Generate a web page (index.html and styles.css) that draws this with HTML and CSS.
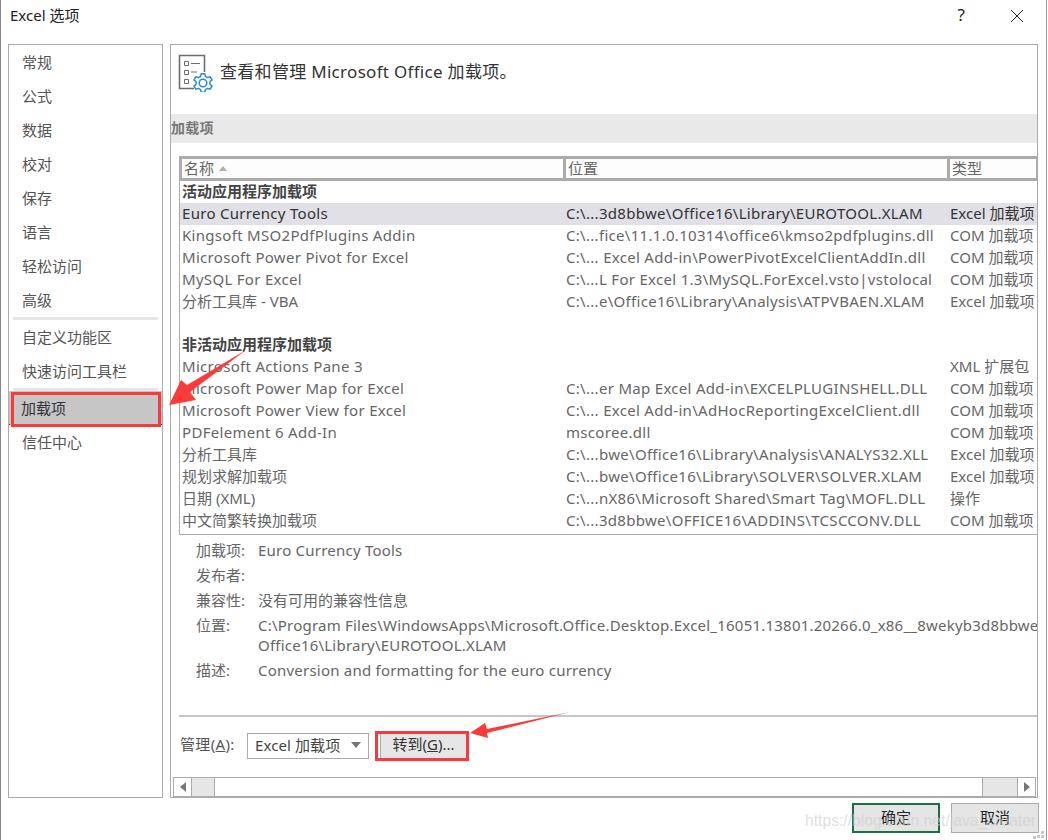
FILE: index.html
```html
<!DOCTYPE html>
<html lang="zh">
<head>
<meta charset="utf-8">
<title>Excel 选项</title>
<link rel="stylesheet" href="styles.css">
</head>
<body>
<div class="dialog">
  <header class="titlebar">
    <span class="title">Excel 选项</span>
    <span class="help">?</span>
    <svg class="close" width="14" height="14" viewBox="0 0 14 14"><path d="M1 1L13 13M13 1L1 13" stroke="#222" stroke-width="1" fill="none"/></svg>
  </header>
  <div class="content">
    <nav class="sidebar">
      <div class="nav-group">
        <div class="nav-item">常规</div>
        <div class="nav-item">公式</div>
        <div class="nav-item">数据</div>
        <div class="nav-item">校对</div>
        <div class="nav-item">保存</div>
        <div class="nav-item">语言</div>
        <div class="nav-item">轻松访问</div>
        <div class="nav-item">高级</div>
      </div>
      <div class="nav-sep"></div>
      <div class="nav-group">
        <div class="nav-item">自定义功能区</div>
        <div class="nav-item">快速访问工具栏</div>
      </div>
      <div class="nav-sep"></div>
      <div class="nav-item nav-active"><span>加载项</span></div>
      <div class="nav-item">信任中心</div>
    </nav>
    <main class="panel">
      <div class="head">
        <svg class="head-icon" width="37" height="38" viewBox="0 0 37 38">
          <path d="M26.500 18V1.500H1.500V34.500H16" fill="none" stroke="#6e6e6e" stroke-width="1.600"/>
          <path d="M6.500 7.500h4v4h-4zM6.500 16.500h4v4h-4zM6.500 25.500h4v4h-4z" fill="none" stroke="#6e6e6e" stroke-width="1"/>
          <path d="M13 9.500h9M13 18h6" stroke="#6e6e6e" stroke-width="1"/>
          <g transform="translate(25 29)" stroke="#2b8bd0" stroke-width="1.500" stroke-linejoin="round">
            <path d="M-2.390 -6.580L-1.810 -9.330L1.810 -9.330L2.390 -6.580L4.500 -5.360L7.170 -6.230L8.980 -3.090L6.890 -1.220L6.890 1.220L8.980 3.090L7.170 6.230L4.500 5.360L2.390 6.580L1.810 9.330L-1.810 9.330L-2.390 6.580L-4.500 5.360L-7.170 6.230L-8.980 3.090L-6.890 1.220L-6.890 -1.220L-8.980 -3.090L-7.170 -6.230L-4.500 -5.360Z" fill="#fff"/>
            <circle r="3.800" fill="none"/>
          </g>
        </svg>
        <span class="head-text">查看和管理 Microsoft Office 加载项。</span>
      </div>
      <div class="band">加载项</div>
      <section class="table">
        <div class="thead">
          <div class="th th-name">名称<i class="sort"></i></div>
          <div class="th th-loc">位置</div>
          <div class="th th-type">类型</div>
        </div>
        <div class="row group"><span>活动应用程序加载项</span></div>
        <div class="row selected"><span>Euro Currency Tools</span><span>C:\...3d8bbwe\Office16\Library\EUROTOOL.XLAM</span><span class="cjk">Excel 加载项</span></div>
        <div class="row"><span>Kingsoft MSO2PdfPlugins Addin</span><span>C:\...fice\11.1.0.10314\office6\kmso2pdfplugins.dll</span><span class="cjk">COM 加载项</span></div>
        <div class="row"><span>Microsoft Power Pivot for Excel</span><span>C:\... Excel Add-in\PowerPivotExcelClientAddIn.dll</span><span class="cjk">COM 加载项</span></div>
        <div class="row"><span>MySQL For Excel</span><span>C:\...L For Excel 1.3\MySQL.ForExcel.vsto|vstolocal</span><span class="cjk">COM 加载项</span></div>
        <div class="row"><span class="cjk">分析工具库 - VBA</span><span>C:\...e\Office16\Library\Analysis\ATPVBAEN.XLAM</span><span class="cjk">Excel 加载项</span></div>
        <div class="row blank"></div>
        <div class="row group"><span>非活动应用程序加载项</span></div>
        <div class="row"><span>Microsoft Actions Pane 3</span><span></span><span class="cjk">XML 扩展包</span></div>
        <div class="row"><span>Microsoft Power Map for Excel</span><span>C:\...er Map Excel Add-in\EXCELPLUGINSHELL.DLL</span><span class="cjk">COM 加载项</span></div>
        <div class="row"><span>Microsoft Power View for Excel</span><span>C:\... Excel Add-in\AdHocReportingExcelClient.dll</span><span class="cjk">COM 加载项</span></div>
        <div class="row"><span>PDFelement 6 Add-In</span><span>mscoree.dll</span><span class="cjk">COM 加载项</span></div>
        <div class="row"><span class="cjk">分析工具库</span><span>C:\...bwe\Office16\Library\Analysis\ANALYS32.XLL</span><span class="cjk">Excel 加载项</span></div>
        <div class="row"><span class="cjk">规划求解加载项</span><span>C:\...bwe\Office16\Library\SOLVER\SOLVER.XLAM</span><span class="cjk">Excel 加载项</span></div>
        <div class="row"><span class="cjk">日期 (XML)</span><span>C:\...nX86\Microsoft Shared\Smart Tag\MOFL.DLL</span><span class="cjk">操作</span></div>
        <div class="row"><span class="cjk">中文简繁转换加载项</span><span>C:\...3d8bbwe\OFFICE16\ADDINS\TCSCCONV.DLL</span><span class="cjk">COM 加载项</span></div>
      </section>
      <dl class="details">
        <dt>加载项:</dt><dd>Euro Currency Tools</dd>
        <dt>发布者:</dt><dd>&nbsp;</dd>
        <dt>兼容性:</dt><dd class="cjk">没有可用的兼容性信息</dd>
        <dt>位置:</dt><dd class="two-line">C:\Program Files\WindowsApps\Microsoft.Office.Desktop.Excel_16051.13801.20266.0_x86__8wekyb3d8bbwe\<br>Office16\Library\EUROTOOL.XLAM</dd>
        <dt>描述:</dt><dd>Conversion and formatting for the euro currency</dd>
      </dl>
      <div class="manage">
        <label class="manage-label">管理(<u>A</u>):</label>
        <div class="select"><span>Excel 加载项</span><i class="caret"></i></div>
        <div class="go-btn">转到(<u>G</u>)...</div>
      </div>
      <div class="scrollbar">
        <div class="sb-btn"><i class="tri-left"></i></div>
        <div class="sb-track-a"></div>
        <div class="sb-thumb"></div>
        <div class="sb-track-b"></div>
        <div class="sb-btn"><i class="tri-right"></i></div>
      </div>
    </main>
  </div>
  <footer class="footer">
    <div class="btn btn-ok">确定</div>
    <div class="btn">取消</div>
  </footer>
</div>
<svg class="annot" width="1048" height="840" viewBox="0 0 1048 840">
  <path d="M246 350L187 385L181 380L169 405L196 400L190 392Z" fill="#fb3a3a"/>
  <path d="M570 712L487 729L485 723L470 733L488 738L487 733Z" fill="#fb3a3a"/>
  <rect x="12.500" y="393.500" width="147" height="32" fill="none" stroke="#f93a3d" stroke-width="3"/>
  <rect x="376.500" y="732.500" width="91" height="27" fill="none" stroke="#f93a3d" stroke-width="3"/>
  <path d="M1041 831h3v3h-3zM1037 835h3v3h-3zM1041 835h3v3h-3zM1033 836h3v3h-3z" fill="#c8c8c8"/>
</svg>
<div class="watermark">https://blog.csdn.net/java_creater</div>
</body>
</html>
```
FILE: styles.css
```css
* { box-sizing: border-box; }
html, body { margin: 0; padding: 0; background: #fff; }
body {
  width: 1048px; height: 840px; overflow: hidden; position: relative;
  font-family: "Noto Sans", "Noto Sans CJK SC", sans-serif;
  font-size: 15px; color: #444;
}
.dialog { width: 1047px; height: 840px; display: flex; flex-direction: column; border-left: 1px solid #888; border-right: 1px solid #999; }
.titlebar { height: 44px; flex: none; display: flex; align-items: flex-start; padding: 5px 0 0 9px; }
.title { font-size: 15px; color: #222; line-height: 20px; flex: 1; }
.help { font-size: 17px; color: #222; line-height: 20px; margin-right: 45px; }
.close { margin: 4px 22px 0 0; }
.content { display: flex; gap: 7px; padding-left: 7px; padding-right: 8px; height: 754px; flex: none; }
.sidebar { width: 155px; flex: none; border: 1px solid #ababab; background: #fff; }
.nav-item { height: 34px; line-height: 34px; padding-left: 13px; color: #555; white-space: nowrap; }
.nav-sep { height: 3px; margin: 0 4px; background: #e6e6e6; }
.nav-active { background: #c6c6c6; color: #333; border-bottom: 1px dotted #444; padding-left: 12px; }
.panel { flex: 1; min-width: 0; border: 1px solid #ababab; display: flex; flex-direction: column; overflow: hidden; }
.head { height: 69px; flex: none; display: flex; align-items: flex-start; padding: 9px 0 0 7px; }
.head-text { font-size: 17px; letter-spacing: .3px; color: #333; margin: 7px 0 0 5px; line-height: 22px; white-space: nowrap; }
.band { height: 29px; flex: none; background: #e9e9e9; font-weight: 700; font-size: 14px; letter-spacing: .3px; color: #777; line-height: 28px; border-bottom: 1px solid #eee; }
.table { margin: 13px 0 0 8px; height: 379px; flex: none; border: 1px solid #ababab; border-right: 0; overflow: hidden; }
.thead { display: grid; grid-template-columns: 386px 384px 1fr; height: 24px; border-bottom: 1px solid #ababab; }
.th { border: solid #ababab; border-width: 2px 3px 2px 0; line-height: 18px; padding-left: 2px; color: #666; white-space: nowrap; background: #fdfdfd; }
.th-name { border-left-width: 2px; }
.th-type { border-right-width: 1px; }
.sort { display: inline-block; margin-left: 5px; vertical-align: 3px; border: 4px solid transparent; border-top: 0; border-bottom: 5px solid #b5b0a5; }
.row { display: grid; grid-template-columns: 384px 384px 1fr; height: 22px; line-height: 20px; padding-left: 2px; color: #666; white-space: nowrap; overflow: hidden; letter-spacing: .3px; }
.row span { overflow: hidden; }
.row .cjk, .details .cjk { letter-spacing: 0; }
.row.group { color: #444; font-weight: 700; display: block; line-height: 20px; letter-spacing: 0; }
.selected { background: #e0e0e6; color: #333; }
.blank { height: 21px; }
.details { margin: 3px 0 0 25px; display: grid; grid-template-columns: 62px 1fr; color: #666; flex: none; }
.details dt, .details dd { margin: 0; line-height: 25px; white-space: nowrap; }
.details dd { letter-spacing: .22px; }
.details .two-line { line-height: 20px; padding: 2px 0 3px; }
.manage { flex: none; margin: 32px 0 0 8px; border-top: 2px solid #c6c6c6; padding-top: 16px; display: flex; align-items: flex-start; height: 46px; }
.manage-label { width: 68px; padding-left: 1px; color: #555; white-space: nowrap; line-height: 23px; letter-spacing: .33px; }
.select { width: 122px; height: 26px; border: 1px solid #ababab; display: flex; align-items: center; justify-content: space-between; padding: 0 7px 3px; color: #444; white-space: nowrap; letter-spacing: .1px; }
.caret { border: 5px solid transparent; border-top: 6px solid #777; border-bottom: 0; }
.go-btn { width: 86px; height: 24px; margin: 1px 0 0 11px; background: #e6e6e6; border-left: 1px solid #aaa; line-height: 21px; text-align: center; color: #333; white-space: nowrap; }
.scrollbar { flex: none; margin: 16px 0 0 2px; height: 20px; display: flex; width: 863px; border: solid #ababab; border-width: 1px 0; }
.sb-btn { width: 19px; background: #fff; display: flex; align-items: center; justify-content: center; border: solid #ababab; border-width: 0 1px; }
.sb-track-a { width: 22px; background: #e6e6e6; }
.sb-thumb { flex: 1; background: #fff; border: solid #ababab; border-width: 0 1px; }
.sb-track-b { width: 34px; background: #e6e6e6; }
.tri-left { border: 5px solid transparent; border-right: 6px solid #777; border-left: 0; }
.tri-right { border: 5px solid transparent; border-left: 6px solid #777; border-right: 0; }
.footer { flex: 1; display: flex; justify-content: flex-end; gap: 11px; padding: 5px 7px 0 0; }
.btn { width: 88px; height: 30px; background: #e5e5e5; border: 1px solid #ababab; line-height: 26px; text-align: center; color: #222; }
.btn-ok { border: 2px solid #1d6f42; line-height: 24px; }
.annot { position: absolute; left: 0; top: 0; pointer-events: none; }
.watermark { position: absolute; left: 805px; top: 812px; font: 15.700px "Liberation Sans", sans-serif; color: rgba(205,205,205,.65); white-space: nowrap; }
```
